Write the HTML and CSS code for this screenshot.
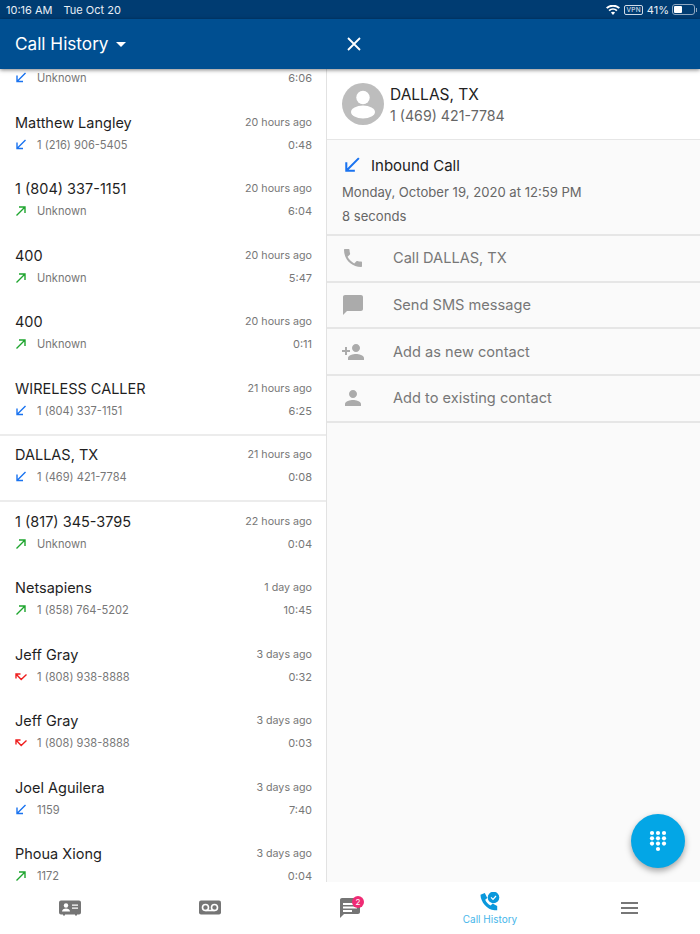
FILE: index.html
```html
<!DOCTYPE html>
<html lang="en">
<head>
<meta charset="utf-8">
<title>Call History</title>
<link rel="stylesheet" href="styles.css">
</head>
<body>
<div class="app">
  <div class="status">
    <div class="status-left"><span>10:16 AM</span><span>Tue Oct 20</span></div>
    <div class="status-right">
      <svg class="wifi" width="14" height="10" viewBox="0 0 14 10"><path d="M7 10 4.900 7.600a3.200 3.200 0 0 1 4.200 0zM3.700 6.300 2.500 5a6.800 6.800 0 0 1 9 0l-1.200 1.300a5 5 0 0 0-6.600 0zM1.400 3.800 0 2.400a10.400 10.400 0 0 1 14 0l-1.400 1.400a8.400 8.400 0 0 0-11.200 0z" fill="#fff"/></svg>
      <span class="vpn">VPN</span>
      <span class="pct">41%</span>
      <span class="battery"><span class="battery-fill"></span></span>
      <span class="battery-tip"></span>
    </div>
  </div>
  <header class="topbar">
    <div class="topbar-left"><span class="title">Call History</span><span class="caret"></span></div>
    <div class="topbar-right">
      <svg width="14" height="14" viewBox="0 0 14 14"><path d="M1 1l12 12M13 1 1 13" stroke="#fff" stroke-width="1.800" fill="none"/></svg>
    </div>
  </header>
  <main class="content">
    <section class="list">
      <div class="rows">
        <article class="row row-cut"><div class="line2"><svg class="dir" viewBox="0 0 12 12"><path d="M10.500 1 2 9.500M2 3.500v6h6" class="in"/></svg><span class="num">Unknown</span><span class="dur">6:06</span></div></article>
        <article class="row"><div class="line1"><span class="name">Matthew Langley</span><span class="when">20 hours ago</span></div><div class="line2"><svg class="dir" viewBox="0 0 12 12"><path d="M10.500 1 2 9.500M2 3.500v6h6" class="in"/></svg><span class="num">1 (216) 906-5405</span><span class="dur">0:48</span></div></article>
        <article class="row"><div class="line1"><span class="name">1 (804) 337-1151</span><span class="when">20 hours ago</span></div><div class="line2"><svg class="dir" viewBox="0 0 12 12"><path d="M1.500 10.500 10 2M4 2h6v6" class="out"/></svg><span class="num">Unknown</span><span class="dur">6:04</span></div></article>
        <article class="row"><div class="line1"><span class="name">400</span><span class="when">20 hours ago</span></div><div class="line2"><svg class="dir" viewBox="0 0 12 12"><path d="M1.500 10.500 10 2M4 2h6v6" class="out"/></svg><span class="num">Unknown</span><span class="dur">5:47</span></div></article>
        <article class="row"><div class="line1"><span class="name">400</span><span class="when">20 hours ago</span></div><div class="line2"><svg class="dir" viewBox="0 0 12 12"><path d="M1.500 10.500 10 2M4 2h6v6" class="out"/></svg><span class="num">Unknown</span><span class="dur">0:11</span></div></article>
        <article class="row"><div class="line1"><span class="name">WIRELESS CALLER</span><span class="when">21 hours ago</span></div><div class="line2"><svg class="dir" viewBox="0 0 12 12"><path d="M10.500 1 2 9.500M2 3.500v6h6" class="in"/></svg><span class="num">1 (804) 337-1151</span><span class="dur">6:25</span></div></article>
        <article class="row row-selected"><div class="line1"><span class="name">DALLAS, TX</span><span class="when">21 hours ago</span></div><div class="line2"><svg class="dir" viewBox="0 0 12 12"><path d="M10.500 1 2 9.500M2 3.500v6h6" class="in"/></svg><span class="num">1 (469) 421-7784</span><span class="dur">0:08</span></div></article>
        <article class="row"><div class="line1"><span class="name">1 (817) 345-3795</span><span class="when">22 hours ago</span></div><div class="line2"><svg class="dir" viewBox="0 0 12 12"><path d="M1.500 10.500 10 2M4 2h6v6" class="out"/></svg><span class="num">Unknown</span><span class="dur">0:04</span></div></article>
        <article class="row"><div class="line1"><span class="name">Netsapiens</span><span class="when">1 day ago</span></div><div class="line2"><svg class="dir" viewBox="0 0 12 12"><path d="M1.500 10.500 10 2M4 2h6v6" class="out"/></svg><span class="num">1 (858) 764-5202</span><span class="dur">10:45</span></div></article>
        <article class="row"><div class="line1"><span class="name">Jeff Gray</span><span class="when">3 days ago</span></div><div class="line2"><svg class="dir" viewBox="0 0 12 12"><path d="M5.500 3H1v4.500M1 3l5.200 5.500L11.500 3.500" class="miss"/></svg><span class="num">1 (808) 938-8888</span><span class="dur">0:32</span></div></article>
        <article class="row"><div class="line1"><span class="name">Jeff Gray</span><span class="when">3 days ago</span></div><div class="line2"><svg class="dir" viewBox="0 0 12 12"><path d="M5.500 3H1v4.500M1 3l5.200 5.500L11.500 3.500" class="miss"/></svg><span class="num">1 (808) 938-8888</span><span class="dur">0:03</span></div></article>
        <article class="row"><div class="line1"><span class="name">Joel Aguilera</span><span class="when">3 days ago</span></div><div class="line2"><svg class="dir" viewBox="0 0 12 12"><path d="M10.500 1 2 9.500M2 3.500v6h6" class="in"/></svg><span class="num">1159</span><span class="dur">7:40</span></div></article>
        <article class="row"><div class="line1"><span class="name">Phoua Xiong</span><span class="when">3 days ago</span></div><div class="line2"><svg class="dir" viewBox="0 0 12 12"><path d="M1.500 10.500 10 2M4 2h6v6" class="out"/></svg><span class="num">1172</span><span class="dur">0:04</span></div></article>
      </div>
    </section>
    <section class="detail">
      <div class="contact">
        <svg class="avatar" width="42" height="42" viewBox="0 0 42 42"><circle cx="21" cy="21" r="21" fill="#bdbdbd"/><circle cx="21" cy="14.500" r="6.700" fill="#fff"/><ellipse cx="21" cy="29" rx="12" ry="6.500" fill="#fff"/></svg>
        <div class="contact-text"><div class="contact-name">DALLAS, TX</div><div class="contact-num">1 (469) 421-7784</div></div>
      </div>
      <div class="callinfo">
        <div class="callinfo-head"><svg class="dir-lg" viewBox="0 0 14 14"><path d="M13 1 2 12M2 4.500V12h7.500" class="in"/></svg><span>Inbound Call</span></div>
        <div class="callinfo-line callinfo-date">Monday, October 19, 2020 at 12:59 PM</div>
        <div class="callinfo-line">8 seconds</div>
      </div>
      <div class="action"><span class="action-icon"><svg width="24" height="24" viewBox="0 0 24 24"><path d="M6.600 10.800c1.400 2.800 3.800 5.100 6.600 6.600l2.200-2.200c.3-.3.700-.4 1-.2 1.100.4 2.300.6 3.600.6.600 0 1 .4 1 1V20c0 .6-.4 1-1 1C10.600 21 3 13.400 3 4c0-.6.400-1 1-1h3.500c.6 0 1 .4 1 1 0 1.300.2 2.500.6 3.600.1.300 0 .7-.2 1z" fill="#ababab"/></svg></span><span>Call DALLAS, TX</span></div>
      <div class="action"><span class="action-icon"><svg width="24" height="24" viewBox="0 0 24 24"><path d="M20 2H4c-1.100 0-2 .9-2 2v18l4-4h14c1.100 0 2-.9 2-2V4c0-1.100-.9-2-2-2z" fill="#ababab"/></svg></span><span>Send SMS message</span></div>
      <div class="action"><span class="action-icon"><svg width="24" height="24" viewBox="0 0 24 24"><path d="M15 12c2.200 0 4-1.800 4-4s-1.800-4-4-4-4 1.800-4 4 1.800 4 4 4zm-9-2V7H4v3H1v2h3v3h2v-3h3v-2H6zm9 4c-2.700 0-8 1.300-8 4v2h16v-2c0-2.700-5.300-4-8-4z" fill="#ababab"/></svg></span><span>Add as new contact</span></div>
      <div class="action"><span class="action-icon"><svg width="24" height="24" viewBox="0 0 24 24"><path d="M12 12c2.200 0 4-1.800 4-4s-1.800-4-4-4-4 1.800-4 4 1.800 4 4 4zm0 2c-2.700 0-8 1.300-8 4v2h16v-2c0-2.700-5.300-4-8-4z" fill="#ababab"/></svg></span><span>Add to existing contact</span></div>
    </section>
    <button class="fab" aria-label="Dial">
      <svg width="18" height="22" viewBox="0 0 18 22" fill="#fff"><circle cx="3" cy="3" r="2.100"/><circle cx="9" cy="3" r="2.100"/><circle cx="15" cy="3" r="2.100"/><circle cx="3" cy="8.300" r="2.100"/><circle cx="9" cy="8.300" r="2.100"/><circle cx="15" cy="8.300" r="2.100"/><circle cx="3" cy="13.600" r="2.100"/><circle cx="9" cy="13.600" r="2.100"/><circle cx="15" cy="13.600" r="2.100"/><circle cx="9" cy="19" r="2.100"/></svg>
    </button>
  </main>
  <nav class="tabs">
    <div class="tab"><svg width="24" height="24" viewBox="0 0 24 24"><path d="M3 4.500h18a2 2 0 0 1 2 2v10a2 2 0 0 1-2 2h-2v1h-2v-1H7v1H5v-1H3a2 2 0 0 1-2-2v-10a2 2 0 0 1 2-2z" fill="#757575"/><circle cx="8" cy="9.500" r="2.200" fill="#fff"/><path d="M4 15.500c0-2 2-3 4-3s4 1 4 3z" fill="#fff"/><path d="M14 8.500h6v1.300h-6zM14 11.500h6v1.300h-6z" fill="#fff"/></svg></div>
    <div class="tab"><svg width="24" height="24" viewBox="0 0 24 24"><rect x="1" y="4.500" width="22" height="14" rx="2" fill="#757575"/><circle cx="7.500" cy="11.500" r="3" fill="none" stroke="#fff" stroke-width="1.600"/><circle cx="16.500" cy="11.500" r="3" fill="none" stroke="#fff" stroke-width="1.600"/><path d="M7.500 14.500h9" stroke="#fff" stroke-width="1.600"/></svg></div>
    <div class="tab"><span class="tab-badged"><svg width="24" height="24" viewBox="0 0 24 24"><path d="M20 2H4c-1.100 0-2 .9-2 2v18l4-4h14c1.100 0 2-.9 2-2V4c0-1.100-.9-2-2-2z" fill="#757575"/><path d="M5 7h14v2H5zM5 10.500h14v2H5zM5 14h9v2H5z" fill="#fff"/></svg><span class="badge">2</span></span></div>
    <div class="tab tab-active"><svg width="20" height="20" viewBox="0 0 20 20"><path d="M.500 2.800 4.800 1l2.500 5-2.100 1.700c.9 2.500 2.900 4.600 5.500 5.700l1.900-1.800 4.600 2.500v4.100h-2.700C7.200 18.200.500 9.800.500 2.800z" fill="#0a98dc"/><circle cx="13.500" cy="5.500" r="5.800" fill="#0a98dc"/><path d="M11 5.300l2 2 3-3.300" stroke="#fff" stroke-width="1.200" fill="none"/></svg><span class="tab-label">Call History</span></div>
    <div class="tab"><span class="menu"><span></span><span></span><span></span></span></div>
  </nav>
</div>
</body>
</html>
```
FILE: styles.css
```css
* { box-sizing: border-box; }
html, body { margin: 0; padding: 0; }
body { font-family: Inter, "Liberation Sans", sans-serif; background: #fafafa; }
.app { width: 700px; height: 934px; display: flex; flex-direction: column; overflow: hidden; }

.status { height: 19px; background: #003c72; color: #e8eef5; display: flex; justify-content: space-between; align-items: center; padding: 0 3px 0 6px; font-size: 11px; }
.status-left { display: flex; gap: 11px; }
.status-right { display: flex; align-items: center; gap: 4px; }
.vpn { font-size: 6.500px; border: 1px solid #cfdbe8; border-radius: 2px; padding: 0 1px; line-height: 8px; letter-spacing: .3px; }
.battery { width: 23px; height: 11px; border: 1px solid #8fa7c0; border-radius: 3px; padding: 1px; display: block; margin-left: -1px; }
.battery-fill { display: block; width: 8px; height: 100%; background: #fff; border-radius: 1px; }
.battery-tip { width: 1px; height: 4px; background: #8fa7c0; margin-left: -3px; }

.topbar { height: 50px; background: #004f91; color: #fff; display: flex; align-items: center; box-shadow: 0 1px 4px rgba(0,0,0,.5); position: relative; z-index: 2; }
.topbar-left { width: 338px; padding: 0 0 1px 15px; display: flex; align-items: center; gap: 7px; }
.title { font-size: 17.200px; }
.caret { width: 0; height: 0; border-left: 5px solid transparent; border-right: 5px solid transparent; border-top: 5px solid #fff; margin-top: 2px; }
.topbar-right { display: flex; padding-left: 9px; }

.content { flex: 1; min-height: 0; display: flex; position: relative; }
.list { width: 327px; background: #fff; border-right: 1px solid #e2e2e2; overflow: hidden; flex: none; }
.rows { margin-top: -2px; }
.row { height: 66.500px; padding: 0 14px 0 15px; display: flex; flex-direction: column; }
.row-cut { height: 34.500px; }
.row-selected { height: 68px; margin-bottom: -1.500px; border-top: 2px solid #ececec; border-bottom: 2px solid #ececec; }
.line1, .line2 { display: flex; justify-content: space-between; align-items: center; }
.line1 { padding-top: 9px; height: 32px; }
.row-selected .line1 { padding-top: 7px; height: 30px; }
.line2 { height: 22px; }
.name { font-size: 14.500px; color: #1f1f1f; }
.when { font-size: 10.700px; color: #777; }
.dir { width: 12px; height: 12px; margin-right: 10px; flex: none; }
.num { font-size: 11.100px; color: #777; flex: 1; }
.dur { font-size: 11px; color: #777; }
.dir path, .dir-lg path { fill: none; stroke-width: 1.400; }
.in { stroke: #1a73f0; }
.out { stroke: #1ea52e; }
.miss { stroke: #ef1f1f; }

.detail { flex: 1; min-width: 0; background: #fafafa; }
.contact { height: 71px; background: #fff; padding: 15px 15px 0; display: flex; gap: 6px; border-bottom: 1px solid #e6e6e6; }
.avatar { flex: none; margin-top: -1px; }
.contact-text { display: flex; flex-direction: column; }
.contact-name { font-size: 15.500px; color: #222; line-height: 22px; }
.contact-num { font-size: 14.200px; color: #666; line-height: 20px; }
.callinfo { height: 96px; padding: 14px 15px 0; border-bottom: 2px solid #e6e6e6; }
.callinfo-head { display: flex; align-items: center; gap: 11px; font-size: 15px; color: #222; height: 22px; padding-left: 2px; }
.dir-lg { width: 16px; height: 16px; }
.dir-lg path { stroke-width: 1.800; }
.callinfo-line { font-size: 13.100px; color: #666; line-height: 24px; }
.callinfo-date { margin-top: 4px; }
.action { height: 46.700px; display: flex; align-items: center; font-size: 14.600px; color: #777; border-bottom: 2px solid #e6e6e6; padding-left: 14px; }
.action-icon { width: 52px; display: flex; }

.fab { position: absolute; right: 15px; bottom: 14px; width: 54px; height: 54px; border-radius: 50%; border: 0; padding: 0; background: #03a6e6; box-shadow: 0 3px 6px rgba(0,0,0,.35); display: flex; align-items: center; justify-content: center; }

.tabs { height: 52px; background: #fff; display: flex; }
.tab { width: 140px; display: flex; flex-direction: column; align-items: center; justify-content: center; }
.tab-badged { position: relative; display: flex; }
.badge { position: absolute; top: 0; left: 14px; width: 12px; height: 12px; border-radius: 50%; background: #ef2b74; color: #fff; font-size: 8px; text-align: center; line-height: 12px; }
.tab-active { justify-content: flex-start; padding-top: 10px; }
.tab-label { font-size: 10px; color: #47b6ea; margin-top: 1px; }
.menu { display: flex; flex-direction: column; gap: 3px; margin-right: 1px; }
.menu span { display: block; width: 17px; height: 2px; background: #777; }
```
